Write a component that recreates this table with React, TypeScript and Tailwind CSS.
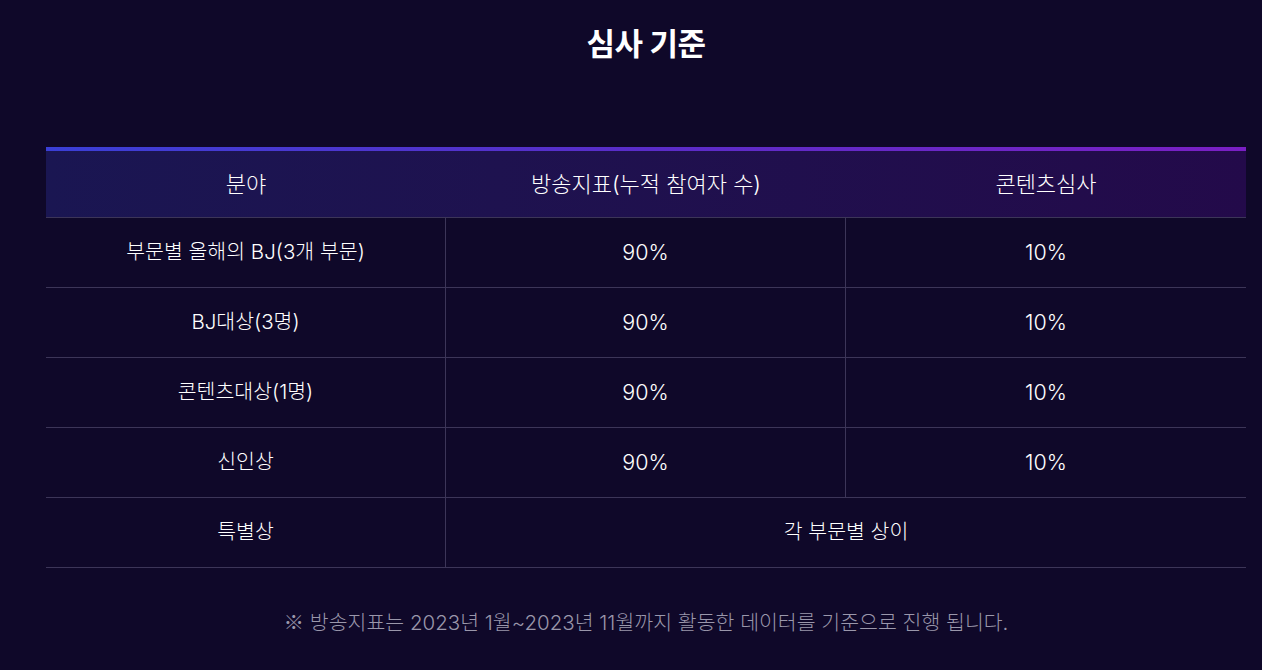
const rows = [
  { name: "부문별 올해의 BJ(3개 부문)", a: "90%", b: "10%" },
  { name: "BJ대상(3명)", a: "90%", b: "10%" },
  { name: "콘텐츠대상(1명)", a: "90%", b: "10%" },
  { name: "신인상", a: "90%", b: "10%" },
];

export default function App() {
  return (
    <div
      className="min-h-[670px] w-full overflow-hidden bg-[#0f0829] text-white"
      style={{ fontFamily: 'Inter, "Noto Sans CJK KR", sans-serif' }}
    >
      <div className="ml-[46px] w-[1200px]">
        <h2 className="pt-[22px] text-center text-[31px] font-bold leading-[44px] tracking-[-0.5px]">
          심사 기준
        </h2>

        <div className="mt-[81px]">
          <div className="h-[4px] bg-gradient-to-r from-[#3a3fd6] via-[#5a2cc8] to-[#7a1fc4]" />
          <div className="grid h-[67px] grid-cols-3 border-b border-[#3c3558] bg-gradient-to-r from-[#1a1652] to-[#230a4a] text-[22px] font-light">
            <div className="flex items-center justify-center">분야</div>
            <div className="flex items-center justify-center">방송지표(누적 참여자 수)</div>
            <div className="flex items-center justify-center">콘텐츠심사</div>
          </div>

          {rows.map((r) => (
            <div
              key={r.name}
              className="grid h-[70px] grid-cols-3 border-b border-[#3c3558] text-[20.5px] font-light"
            >
              <div className="flex items-center justify-center border-r border-[#3c3558]">
                {r.name}
              </div>
              <div className="flex items-center justify-center border-r border-[#3c3558] text-[21.5px]">
                {r.a}
              </div>
              <div className="flex items-center justify-center text-[21.5px]">{r.b}</div>
            </div>
          ))}

          <div className="grid h-[70px] grid-cols-3 border-b border-[#3c3558] text-[20.5px] font-light">
            <div className="flex items-center justify-center border-r border-[#3c3558]">특별상</div>
            <div className="col-span-2 flex items-center justify-center">각 부문별 상이</div>
          </div>
        </div>

        <p className="mt-[38px] text-center text-[20.5px] font-light text-[#9a97ab]">
          <span style={{ fontFamily: '"Noto Sans CJK KR", sans-serif' }}>※</span> 방송지표는 2023년
          1월~2023년 11월까지 활동한 데이터를 기준으로 진행 됩니다.
        </p>
      </div>
    </div>
  );
}
